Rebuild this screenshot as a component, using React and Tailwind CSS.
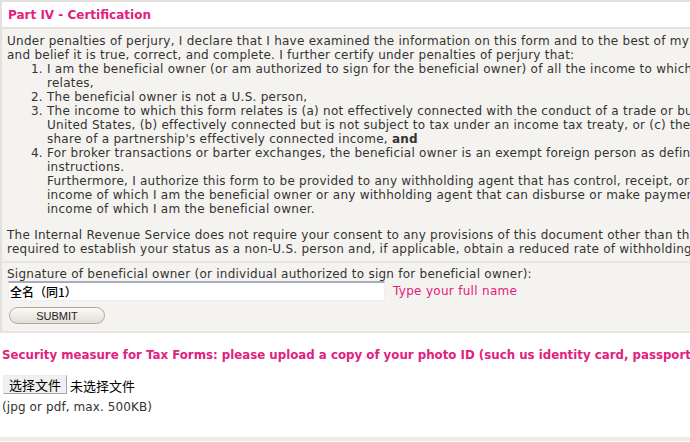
export default function App() {
  const pink = "text-[#e2207f]";
  return (
    <div className="w-[690px] h-[442px] overflow-hidden bg-white font-['DejaVu_Sans',sans-serif] text-[12px] tracking-[0.25px] leading-[14px] text-[#333]">
      <div className="w-[820px]">
        <div className="border-t-2 border-l-2 border-[#e3e1de]">
          <div className={`h-[25px] bg-white px-[6px] flex items-center font-bold text-[12px] tracking-normal ${pink}`}>Part IV - Certification</div>
          <div className="border-t-2 border-[#e3e1de] bg-[#f5f3f0]">
            <div className="px-[5px] pt-[5px] pb-[5px] whitespace-nowrap">
              <p>Under penalties of perjury, I declare that I have examined the information on this form and to the best of my knowledge<br />and belief it is true, correct, and complete. I further certify under penalties of perjury that:</p>
              <ol className="list-decimal pl-[40px]">
                <li>I am the beneficial owner (or am authorized to sign for the beneficial owner) of all the income to which this form<br />relates,</li>
                <li>The beneficial owner is not a U.S. person,</li>
                <li>The income to which this form relates is (a) not effectively connected with the conduct of a trade or business in the<br />United States, (b) effectively connected but is not subject to tax under an income tax treaty, or (c) the partner's<br />share of a partnership's effectively connected income, <b>and</b></li>
                <li>For broker transactions or barter exchanges, the beneficial owner is an exempt foreign person as defined in the<br />instructions.<br />Furthermore, I authorize this form to be provided to any withholding agent that has control, receipt, or custody of the<br />income of which I am the beneficial owner or any withholding agent that can disburse or make payments of the<br />income of which I am the beneficial owner.</li>
              </ol>
              <p className="mt-[12px]">The Internal Revenue Service does not require your consent to any provisions of this document other than the certifications<br />required to establish your status as a non-U.S. person and, if applicable, obtain a reduced rate of withholding.</p>
            </div>
            <div className="border-t-2 border-[#e8e6e3] px-[5px] pt-[4px] pb-[7px]">
              <div className="whitespace-nowrap">Signature of beneficial owner (or individual authorized to sign for beneficial owner):</div>
              <div className="flex items-center gap-[8px]">
                <div className="w-[377px] h-[20px] ml-[1px] bg-white border border-[#eceef2] border-t-2 border-t-[#a4adc2] flex items-center px-[1px] text-black text-[12px] tracking-normal font-['Noto_Sans_CJK_SC',sans-serif] font-medium">全名（同1）</div>
                <span className={pink + " text-[12px] tracking-[0.3px]"}>Type your full name</span>
              </div>
              <div className="mt-[6px] ml-[2px] w-[96px] h-[17px] rounded-full border border-[#aca89f] bg-gradient-to-b from-[#faf9f6] to-[#e3ded5] flex items-center justify-center text-[11px] font-['Liberation_Sans',sans-serif] text-[#222] tracking-normal">SUBMIT</div>
            </div>
          </div>
        </div>
        <div className="border-t-2 border-[#e8e6e3] bg-white h-[106px] pt-[15px]">
          <div className={`font-bold text-[11.8px] tracking-normal whitespace-nowrap px-[2px] ${pink}`}>Security measure for Tax Forms: please upload a copy of your photo ID (such us identity card, passport, or driving licence)</div>
          <div className="mt-[13px] flex items-end px-[3px] font-['Noto_Sans_CJK_SC',sans-serif] text-[13px] tracking-normal text-black">
            <div className="h-[19px] w-[64px] bg-[#f0f0f0] border border-[#a7a7a7] border-t-[#ececec] border-l-[#ececec] flex items-center justify-center leading-none">选择文件</div>
            <span className="ml-[3px] leading-[16px]">未选择文件</span>
          </div>
          <div className="px-[2px] mt-[6px] tracking-[0.1px]">(jpg or pdf, max. 500KB)</div>
        </div>
        <div className="h-[4px] bg-[#eeebe7]"></div>
      </div>
    </div>
  );
}
